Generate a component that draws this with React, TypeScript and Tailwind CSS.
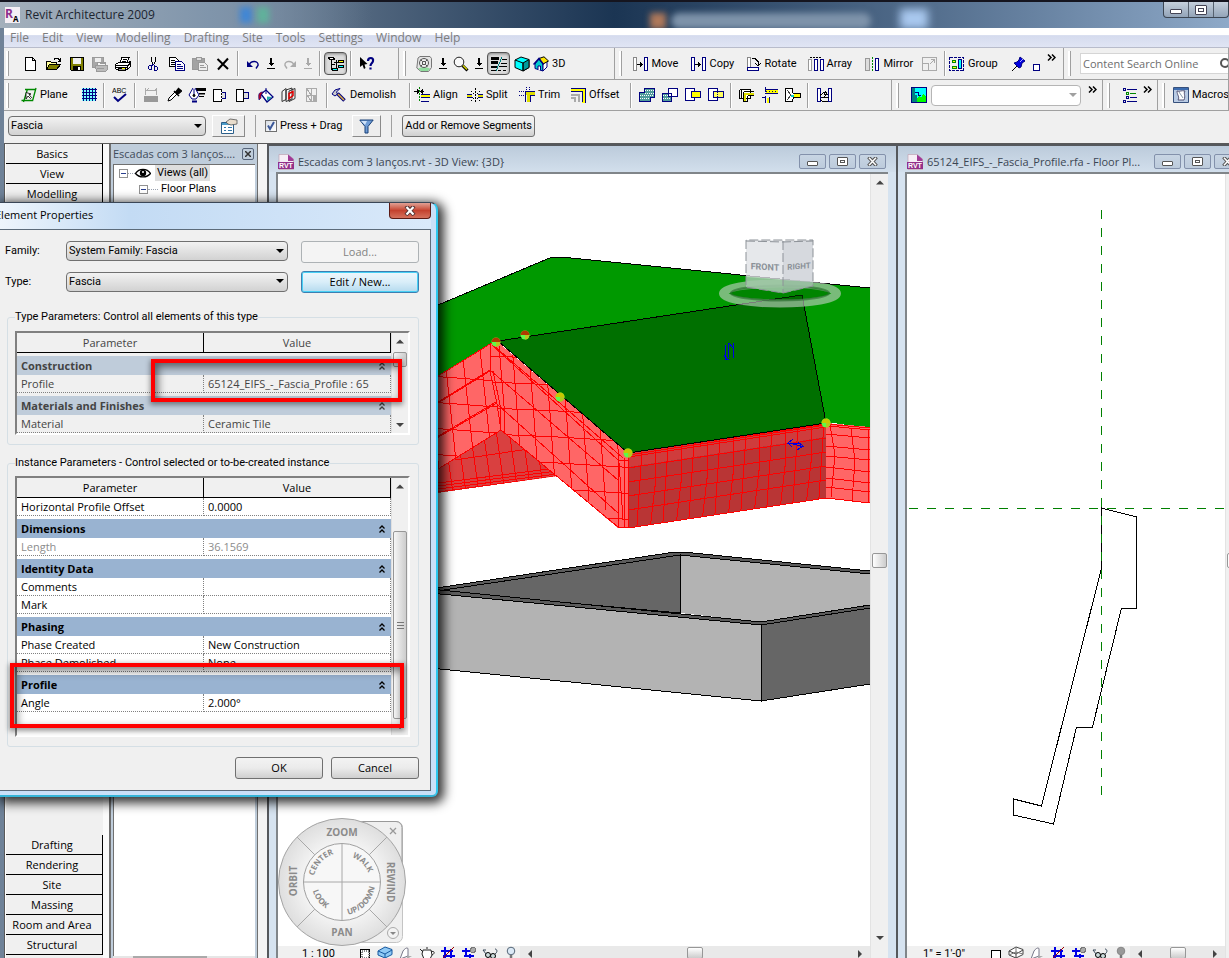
import { useState } from 'react';
import type { ReactNode } from 'react';
import clsx from 'clsx';

const NAVY = '#000080';

function Icon({ w = 16, children, smooth }: { w?: number; children: ReactNode; smooth?: boolean }) {
  return (
    <svg
      width={w}
      height="16"
      viewBox={`0 0 ${w} 16`}
      fill="none"
      stroke="#000"
      className="shrink-0"
      shapeRendering={smooth ? 'auto' : 'crispEdges'}
      aria-hidden="true"
    >
      {children}
    </svg>
  );
}

/* ---------- toolbar icons ---------- */

const icons: Record<string, ReactNode> = {
  new: <Icon><path d="M2.500 1.500h7l3 3v10h-10zM9.500 1.500v3h3" fill="#fff" /></Icon>,
  open: (
    <Icon>
      <path d="M.5 13.500v-8h4l1 1h5v3" fill="#ffff99" />
      <path d="M.5 13.500l3-5h11l-4 5z" fill="#808000" />
      <path d="M8 3.500l1-1h3l2 2M14.500 2v3h-3" />
    </Icon>
  ),
  save: (
    <Icon>
      <path d="M1.500 1.500h13v13h-12l-1-1z" fill="#808000" />
      <path d="M4 2h8v6H4z" fill="#f0f0f0" stroke="none" />
      <path d="M4 10h8v5H4z" fill="#000" stroke="none" />
      <path d="M9 11h2v3H9z" fill="#fff" stroke="none" />
    </Icon>
  ),
  saveGray: (
    <Icon>
      <g stroke="#9a9a9a">
        <path d="M.5 1.500h11v10H.5z" fill="#a8a8a8" />
        <path d="M3 2h6v4H3z" fill="#eee" stroke="none" />
        <path d="M5 10l1-4h8l-1 4z" fill="#f4f4f4" />
        <path d="M3.500 9.500h12v4l-2 2h-9z" fill="#bbb" />
        <path d="M5 12.500h7M7.500 7.500h5" />
      </g>
    </Icon>
  ),
  print: (
    <Icon>
      <path d="M5 6.500l2-5h7l-2 5z" fill="#fff" />
      <path d="M7.500 3.500h4M6.500 5h4" />
      <path d="M.5 8.500l3-2h10l2-1v5l-3 3H2l-1.500-1z" fill="#fff" />
      <path d="M1 9.500h12M1 11.500h11M12.500 13v-3l3-3" />
      <path d="M3 12h7v2.500H3z" fill="#999" />
      <path d="M7 12.500h3" stroke="#ff0" />
    </Icon>
  ),
  cut: (
    <Icon>
      <path d="M5.500 1v4l2 4M9.500 1v4l-2 4" />
      <g stroke={NAVY}>
        <path d="M3.500 9.500h2v4h-2l-1-1v-2zM8.500 10.500h2l1 1v2l-1 1h-2z" />
        <path d="M5.500 9.500l2-1 2 2" />
      </g>
    </Icon>
  ),
  copy: (
    <Icon>
      <path d="M.5 1.500h6l3 3v6h-9z" fill="#fff" />
      <path d="M2 4.500h4M2 6.500h5M2 8.500h5" />
      <path d="M6.500 5.500h6l3 3v6h-9z" fill="#fff" stroke={NAVY} />
      <path d="M8 8.500h4M8 10.500h6M8 12.500h6" stroke={NAVY} />
    </Icon>
  ),
  paste: (
    <Icon>
      <path d="M.5 2.500h12v11H.5z" fill="#a3a3a3" stroke="#999" />
      <path d="M4 1h5v3H4z" fill="#ddd" stroke="#999" />
      <path d="M6.500 6.500h6l3 3v5h-9z" fill="#eee" stroke="#999" />
      <path d="M8 9.500h4M8 11.500h6" stroke="#999" />
    </Icon>
  ),
  del: <Icon smooth><path d="M2.500 3l10.500 10M13 2.500L3 13.500" strokeWidth="2" /></Icon>,
  undo: <Icon smooth><path d="M4 9c2-5 10-4.500 9 .5l-2 3" stroke={NAVY} strokeWidth="1.400" /><path d="M2 5v6h6z" fill={NAVY} stroke="none" /></Icon>,
  redo: <Icon smooth><path d="M12 9C10 4 2 4.500 3 9.500l2 3" stroke="#aaa" strokeWidth="1.400" /><path d="M14 5v6H8z" fill="#aaa" stroke="none" /></Icon>,
  down: <Icon w={8}><path d="M3 2h2v5h2L4 10 1 7h2zM0 12h8v1H0z" fill="#000" stroke="none" /></Icon>,
  downGray: <Icon w={8}><path d="M3 2h2v5h2L4 10 1 7h2zM0 12h8v1H0z" fill="#aaa" stroke="none" /></Icon>,
  tree: (
    <Icon>
      <path d="M3.500 4v9h2M3.500 8.500h3M8.500 4v8M6 6.500h4" />
      <path d="M.5 1.500h5l1 2h-5z" fill="#fff" />
      <path d="M10.500 4.500h5v2h-5z" fill="#ff0" />
      <path d="M10.500 9.500h5v2h-5z" fill="#0ff" />
      <path d="M4.500 12.500h5v2h-5z" fill="#0ff" />
    </Icon>
  ),
  help: (
    <Icon smooth>
      <path d="M1 1v10l2.500-2 1.500 4 1.500-1-1-3.500 3-.5z" fill="#000" stroke="none" />
      <path d="M9 5c0-4 6-4 5 0 0 2-2.500 2-2.500 5M11.500 11.500v2" stroke={NAVY} strokeWidth="2.200" />
    </Icon>
  ),
  wheel: (
    <Icon smooth>
      <path d="M2 2l2-1.500h10l1.500 2v9l-3 4H5L.8 12z" fill="#e4e4e4" stroke="#777" />
      <path d="M2 12.500c4-2 8-2 12 0l-2 2.500H5z" fill="#8fdc9c" stroke="none" />
      <circle cx="8" cy="7" r="4.500" fill="#eee" stroke="#555" />
      <path d="M6.500 5.500h3v3h-3zM4.500 3.500l2 2M11.500 3.500l-2 2M4.500 10.500l2-2M11.500 10.500l-2-2" stroke="#555" />
    </Icon>
  ),
  zoom: (
    <Icon smooth>
      <circle cx="6" cy="6" r="4.800" fill="#f8f8f8" stroke="#222" />
      <path d="M9.500 9.500l5 5" strokeWidth="3" />
      <path d="M10 9.500l4 4" stroke="#d6d600" strokeWidth="1.500" />
    </Icon>
  ),
  thin: (
    <Icon>
      <path d="M0 2.500h8M0 6.500h7" strokeWidth="3" />
      <path d="M0 10.500h6" strokeWidth="2" />
      <path d="M0 14.500h5M11 3.500h5M10 7.500h6M8 10.500h8M7 14.500h3M12 14.500h3" />
      <path d="M11 1L5 15" stroke="#008080" />
    </Icon>
  ),
  cube: (
    <Icon smooth>
      <path d="M1 4l6-3 8 2.500v8L9 15l-8-3.500z" fill="#0ff" />
      <path d="M9 7l6-3.500v8L9 15z" fill="#009c9c" />
      <path d="M1 4l8 3v8" />
    </Icon>
  ),
  house: (
    <Icon smooth>
      <path d="M2 8l4-5 4 5v7l-8-2.500z" fill="#0cc" stroke={NAVY} />
      <path d="M10 8l4-3v6l-4 4z" fill="#fff" stroke={NAVY} />
      <path d="M6 2.500L11 .8 15.500 5 10 8z" fill="#ffe600" />
      <path d="M.5 8.500L6 2.500l4.500 6" stroke={NAVY} strokeWidth="1.500" />
      <path d="M5 14v-4h2.500v4.500" fill="#fff" stroke={NAVY} />
    </Icon>
  ),
  move: <Icon><path d="M.5 1.500h3v13h-3z" fill="#fff" stroke="#888" /><path d="M11.500 1.500h3v13h-3z" fill="#fff" stroke={NAVY} strokeWidth="1.500" /><path d="M4 8.500h6M7.500 6v5M8.500 7v3" /></Icon>,
  copy2: <Icon><path d="M.5 1.500h3v13h-3zM11.500 1.500h3v13h-3z" fill="#fff" stroke={NAVY} strokeWidth="1.500" /><path d="M4 8.500h6M7.500 6v5M8.500 7v3" /></Icon>,
  rotate: <Icon><path d="M1.500 1.500h3v10h-3z" fill="#fff" stroke="#888" /><path d="M1.500 11.500h11v3h-11z" fill="#fff" stroke={NAVY} strokeWidth="1.500" /><path d="M6 2.500h3l3 3v4M9.500 7.500l2.500 2.500 2.500-2.500" /></Icon>,
  array: <Icon><path d="M.5 3.500h3v11h-3z" fill="#fff" stroke="#999" /><path d="M6.500 3.500h3v11h-3zM12.500 3.500h3v11h-3z" fill="#fff" stroke={NAVY} /><path d="M2 1.500h12" strokeDasharray="2 1" /></Icon>,
  mirror: <Icon><path d="M.5 2.500h4v12h-4z" fill="#ddd" stroke="#999" /><path d="M10.500 2.500h3v12h-3z" fill="#fff" stroke={NAVY} strokeWidth="1.500" /><path d="M7.500 1v14" stroke="#080" strokeDasharray="2 1" /></Icon>,
  scale: <Icon><path d="M.5 1.500h14v13H.5zM.5 7.500h6v7M7.500 8.500l5-5M9 3.500h3.500V7" stroke="#aaa" /></Icon>,
  group: (
    <Icon>
      <path d="M.5 1.500h14v13H.5z" stroke={NAVY} strokeDasharray="3 1" />
      <path d="M3.500 4.500h3v2h-3zM3.500 10.500h4v2h-4z" fill="#ff0" stroke="#080" />
      <path d="M9.500 3.500h3v9h-3z" fill="#0ff" stroke={NAVY} />
    </Icon>
  ),
  pin: <Icon smooth><path d="M1 15l5-5" /><path d="M3 7l3-1 2-2 1-3 5 4-3 2-1 4-2 1z" fill="#0000e0" stroke={NAVY} /><path d="M9 6l3-3" stroke="#aaf" /></Icon>,
  plane: <Icon smooth><path d="M4 2.500h11M.5 13.500h11M2.500 15L6.500 2M11.500 14L15 1" stroke="#080" strokeWidth="1.300" /><path d="M5 12V5.500l5 1.500-2 .7 2.500 2.800-1 1-2.500-2.500z" fill="#fff" stroke="#000" strokeWidth=".8" /></Icon>,
  grid: <Icon><path d="M1 1h14v13H1z" fill="#7ff" stroke="none" /><path d="M1 2.500h15M1 5.500h15M1 8.500h15M1 11.500h15M2.500 1v13M5.500 1v13M8.500 1v13M11.500 1v13M14.500 1v13" stroke={NAVY} /></Icon>,
  dims: <Icon><path d="M1 9h14v6H1z" fill="#999" stroke="none" /><path d="M2.500 1v7M13.500 1v7M3 3.500h10M4 3l2-2M12 3l2-2" stroke="#aaa" /></Icon>,
  dropper: <Icon smooth><path d="M2 14l1-3 6-6 2 2-6 6z" fill="#fff" /><path d="M8 4l5 5M9.500 5.500l3-4 3 2.500-4 3.500z" strokeWidth="1.500" fill="#000" /></Icon>,
  linework: <Icon w={18} smooth><path d="M8 1h10v3H8zM11 6h6v1.500h-6zM11 9h5v1h-5z" fill="#000" stroke="none" /><path d="M5 1L1 8l3 4h4l3-4-4-7M6 2v6" fill="#fff" stroke={NAVY} /><path d="M4 14.500h5" stroke={NAVY} strokeWidth="2" /><circle cx="6" cy="8.500" r="1" fill="#000" /></Icon>,
  boxIn: <Icon><path d="M7 5.500h6v6H7" fill="#ddd" stroke={NAVY} /><path d="M1.500 2.500h8v12h-8z" fill="#fff" stroke="none" /><path d="M9.500 2.500v12" strokeDasharray="2 1" /><path d="M9.500 14.500h-8v-12h8" /></Icon>,
  boxOut: <Icon><path d="M8 5.500h5v6H8" fill="#ddd" stroke={NAVY} /><path d="M1.500 2.500h7v12h-7z" fill="#fff" /></Icon>,
  paint: <Icon smooth><path d="M3 7l5-4 7 7-6 5z" fill="#fff" stroke={NAVY} strokeWidth="1.300" /><path d="M8 1v6" stroke={NAVY} /><path d="M9 9.500l5 .5-5 4z" fill="#2aa" stroke="none" /><path d="M5 5C1 5 0 7 1 13l2-2V8z" fill="#c00020" stroke={NAVY} strokeWidth=".6" /></Icon>,
  book: <Icon smooth><path d="M1 4.500l4-3v11l-4 2zM5 3l6-2v11l-6 2.500zM8 4l6-2.500v10l-6 3z" fill="#f4f4f4" stroke="#333" /><path d="M8 6.500l4-2v4l-4 3z" stroke="#e00000" strokeWidth="1.500" /></Icon>,
  split2: <Icon><g stroke="#aaa"><path d="M2.500 1.500h10v13h-10zM7.500 2v12M3 8.500h9" /><path d="M3 2l4 6M3 8l4 6" /><path d="M9 9h3v5H9z" fill="#aaa" /></g></Icon>,
  hammer: <Icon smooth><path d="M1 7l3-4 5-1.500L5.500 5l1 2L4 9z" fill="#ccc" stroke={NAVY} /><path d="M6.500 6.500l7 7" stroke={NAVY} strokeWidth="3.500" /><path d="M7 7l6 6" stroke="#e0b040" strokeWidth="1.500" /></Icon>,
  align: <Icon><path d="M0 4.500h5M10 4.500H6M3 2.500l2 2-2 2M9 2.500l-2 2 2 2" /><path d="M5.500 0v14" stroke="#080" strokeDasharray="2 1" /><path d="M7 7.500h9M7 10.500h9M7 14.500h8" stroke={NAVY} /><path d="M7 9h9" stroke="#ff0" strokeWidth="2" /></Icon>,
  split: <Icon><path d="M0 9h5M11 9h5" stroke="#dd0" strokeWidth="3" /><path d="M0 7.500h5M0 10.500h6M11 7.500h5M11 10.500h5" stroke={NAVY} /><path d="M8.500 1v14M4 4l3 3M13 4l-3 3M4 14l3-3M13 14l-3-3" strokeDasharray="2 1" /></Icon>,
  trim: <Icon><path d="M6 6.500h10M9 5v10" stroke="#dd0" strokeWidth="3" /><path d="M6 4.500h10M11 8.500h5M6.500 5v10M11.500 9v6" stroke={NAVY} /><path d="M0 4.500h5M0 8.500h5M7.500 0v4M10.500 0v4" stroke={NAVY} strokeDasharray="1 1" /></Icon>,
  offset: <Icon><path d="M1 3h12.500V16" stroke="#ff0" strokeWidth="3" /><path d="M1 1.500h14v14M1 4.500h11V15" stroke={NAVY} /><path d="M1 7.500h8V15M1 11h4v4" stroke="#aaa" strokeWidth="2" /></Icon>,
  join: <Icon><path d="M5.500 1.500h10v9h-4v4H.500v-9h5z" fill="#4f9a9a" stroke={NAVY} /><path d="M6 3.500h9M6 6.500h9M1 8.500h14M1 11.500h10" stroke="#fff" strokeDasharray="1 1" /></Icon>,
  unjoin: <Icon><path d="M.5 6.500h9v8h-9z" fill="#4f9a9a" stroke={NAVY} /><path d="M1 8.500h8M1 11.500h8" stroke="#fff" strokeDasharray="1 1" /><path d="M6.500 1.500h9v8h-9z" fill="#fff" stroke={NAVY} /><path d="M6 6.500h3.500v3" stroke={NAVY} /></Icon>,
  cutGeo: <Icon><path d="M.5 1.500h9v12h-9z" fill="#fff" stroke={NAVY} /><path d="M6.500 4.500h9v6h-9z" fill="#ff0" stroke={NAVY} /></Icon>,
  uncutGeo: <Icon><path d="M.5 1.500h9v12h-9z" fill="#fff" stroke={NAVY} /><path d="M5.500 4.500h10v6h-10z" fill="#ffff60" stroke={NAVY} /><path d="M9.500 5v5" stroke={NAVY} strokeDasharray="1 1" /></Icon>,
  wallJoin: <Icon><path d="M.5 2.500h11v9h-9v-9" fill="#fff" /><path d="M5 6.500h10M6 6v9" stroke="#dd0" strokeWidth="2" /><path d="M4.500 4.500h10M8.500 8.500h6M4.500 4.500v10h4v-6M.5 2.500v9h3" /></Icon>,
  wallSplit: <Icon><path d="M4 4.500h12" stroke="#ff0" strokeWidth="3" /><path d="M3 2.500h13M3 6.500h13M0 10.500h3M3.500 9v7M7.500 10v6M3.500 0v5" stroke={NAVY} /><path d="M5.500 11v5" stroke="#ff0" strokeWidth="2" /><path d="M4 4.500h10" stroke={NAVY} strokeDasharray="1 2" /></Icon>,
  beam: <Icon><path d="M.5 1.500h7v4l2 2v3l-2 2v2h-7z" fill="#fff" /><path d="M2 3l4 5-4 5" stroke="#444" /><path d="M9 8.500h6" stroke="#ff0" strokeWidth="3" /><path d="M8 6.500h7.500v4H8" /><path d="M6 8.500h3" stroke="#0cc" strokeWidth="2" /></Icon>,
  align2: <Icon><path d="M1.500 1.500h3v13h-3zM12.500 1.500h3v13h-3z" fill="#fff" stroke={NAVY} /><path d="M4 8.500l4-3v2h4M13 10.500H5M4 12.500l3 2h5M9 4l2 3-3 3" /></Icon>,
  scenery: <Icon><path d="M.5.500h15v15H.500z" fill="#0ff" stroke={NAVY} /><path d="M1 1v14h5V8H4V1z" fill="#008080" stroke="none" /><path d="M6 15v-4l3-2 1 2 2-4 3 3v5z" fill="#0f0" stroke="none" /><path d="M4 5h3v3h3" stroke={NAVY} /></Icon>,
  list: <Icon><path d="M1.500 1.500h2v2h-2zM4.500 9.500h2v2h-2zM1.500 13.500h2v2h-2zM5 2.500h10M8 10.500h7M5 14.500h10" stroke={NAVY} /><path d="M4.500 5.500h2v2h-2zM8 6.500h6" stroke="#080" /></Icon>,
  macros: <Icon smooth><path d="M.5.500h15v15H.500z" fill="#b9cbe4" stroke="#36507c" /><path d="M1 1h14v2H1z" fill="#3c6cb0" stroke="none" /><path d="M4 4c3 1 4-1 8 0-2 3 1 4-1 9H5c2-3-1-5-1-9z" fill="#fff" stroke="#557" /><path d="M6 5l4 6" stroke="#89a" /></Icon>,
};

function Abc() {
  return (
    <svg width="16" height="18" viewBox="0 0 16 18" aria-hidden="true">
      <text x="0" y="7" fontSize="7" className="font-['Liberation_Sans',sans-serif]">ABC</text>
      <path d="M2 11l4 4L14 8" fill="none" stroke={NAVY} strokeWidth="2" />
    </svg>
  );
}

function Tool({ name, label, text, className, pressed }: { name: string; label?: string; text?: string; className?: string; pressed?: boolean }) {
  return (
    <button
      type="button"
      aria-label={text ? undefined : label ?? name}
      className={clsx(
        'flex h-[23px] shrink-0 items-center whitespace-nowrap',
        text ? 'gap-[3px] text-left' : 'justify-center',
        pressed && 'rounded-sm border border-[#555] bg-[#dcdcdc] shadow-[inset_0_1px_3px_rgba(0,0,0,0.4)]',
        className ?? 'w-[23px]'
      )}
    >
      {name === 'abc' ? <Abc /> : icons[name]}
      {text && <span>{text}</span>}
    </button>
  );
}

function Sep() {
  return <span className="mx-[3px] h-[25px] w-[2px] shrink-0 border-l border-[#a0a0a0] bg-white" />;
}

function Band({ className, children }: { className?: string; children: ReactNode }) {
  return (
    <div className={clsx('flex h-full items-center overflow-hidden border-r border-[#a0a0a0] pl-[2px]', className)}>
      <span className="h-[25px] w-[3px] shrink-0 border-r border-[#a0a0a0] bg-white" />
      {children}
    </div>
  );
}

function More() {
  return (
    <button type="button" aria-label="More buttons" className="mb-3 w-4 shrink-0">
      <svg width="9" height="7" viewBox="0 0 9 7" fill="none" stroke="#000" strokeWidth="1.500" aria-hidden="true">
        <path d="M1 .5l3 3-3 3M5 .5l3 3-3 3" />
      </svg>
    </button>
  );
}

function Caret({ className }: { className?: string }) {
  return (
    <svg width="8" height="4" viewBox="0 0 8 4" className={clsx('pointer-events-none absolute top-2', className)} aria-hidden="true">
      <path d="M0 0h8L4 4z" fill="currentColor" />
    </svg>
  );
}

function Combo({ id, value, className, label }: { id: string; value: string; className: string; label?: string }) {
  return (
    <div className={clsx('relative', className)}>
      <select
        id={id}
        aria-label={label}
        className="block h-5 w-full appearance-none rounded-sm border border-[#707070] bg-linear-to-b from-[#f2f2f2] to-[#d2d2d2] pl-[2px] leading-4 text-black"
      >
        <option>{value}</option>
      </select>
      <Caret className="right-1 text-black" />
    </div>
  );
}

function PushButton({ children, className, disabled }: { children: ReactNode; className: string; disabled?: boolean }) {
  return (
    <button
      type="button"
      disabled={disabled}
      className={clsx(
        'h-[22px] rounded-[3px] border',
        disabled
          ? 'border-[#adb2b5] bg-[#f4f4f4] text-[#838383]'
          : 'border-[#707070] bg-linear-to-b from-[#f3f3f3] via-[#ebebeb] to-[#cfcfcf] text-black',
        className
      )}
    >
      {children}
    </button>
  );
}

/* ---------- title, menu, toolbars ---------- */

function TitleBar() {
  return (
    <header className="flex h-7 shrink-0 items-start overflow-hidden border-t-2 border-[#15151f] bg-linear-to-r from-[#a8b4c0] via-[#1b3553] via-50% to-[#8ea9c8]">
      <div className="flex h-full flex-1 items-center gap-[5px] bg-linear-to-r from-[#a4b0bc] from-0% via-[#8095ab] via-18% to-transparent to-32% pl-1">
        <svg width="16" height="18" viewBox="0 0 16 18" className="shrink-0" aria-hidden="true">
          <path d="M1 1h15v16H1z" fill="#f4eef4" />
          <text x="1" y="12" fontSize="12" fontWeight="700" fill="#8c2f8c" className="font-['Open_Sans',sans-serif]">R</text>
          <text x="9" y="16" fontSize="8" fontWeight="700" className="font-['Open_Sans',sans-serif]">A</text>
        </svg>
        <h1 className="text-[12px] text-[#1c2530]">Revit Architecture 2009</h1>
        <span className="ml-[80px] h-4 w-3 bg-[#3f86d6] blur-[3px]" />
        <span className="h-4 w-3 bg-[#5fb39b] blur-[3px]" />
        <span className="mt-3 ml-[376px] h-4 w-4 bg-[#b0795a] blur-[3px]" />
        <span className="mt-3 h-4 w-[200px] rounded-lg bg-[#7e93aa] blur-[3px]" />
        <span className="mt-2 ml-6 h-5 w-7 bg-[#a9c8ef] blur-[4px]" />
      </div>
      <div className="flex h-4 rounded-b border border-t-0 border-[#3c4653] bg-linear-to-b from-[#c5d0dd] to-[#93a4b8]">
        <button type="button" aria-label="Minimize" className="flex w-[25px] items-end justify-center border-r border-[#56616f] pb-[3px]">
          <span className="h-[5px] w-3 rounded-[1px] border border-[#445] bg-white" />
        </button>
        <button type="button" aria-label="Restore" className="flex w-[25px] items-center justify-center border-r border-[#56616f]">
          <span className="h-[10px] w-3 rounded-[1px] border border-[#445] bg-white p-[2px]"><span className="block h-full border border-[#445]" /></span>
        </button>
        <span className="w-[14px]" />
      </div>
    </header>
  );
}

const menus = ['File', 'Edit', 'View', 'Modelling', 'Drafting', 'Site', 'Tools', 'Settings', 'Window', 'Help'];

function MenuBar() {
  return (
    <nav className="flex h-5 shrink-0 items-center gap-[13px] border-b border-[#b8bccb] bg-linear-to-b from-white from-35% via-[#d5dbee] via-40% to-[#e0e5f4] pl-[6px] text-[12px] text-[#7d7d7d]">
      {menus.map((m) => (
        <button key={m} type="button">{m}</button>
      ))}
    </nav>
  );
}

function Toolbars() {
  const [drag, setDrag] = useState(true);
  return (
    <div className="shrink-0 bg-[#f0f0f0] font-['Roboto',sans-serif] text-[11px] text-black">
      <div className="flex h-8 items-center border-b border-[#a0a0a0]">
        <Band className="w-[395px] shrink-0">
          <span className="w-[10px]" />
          <Tool name="new" /><Tool name="open" /><Tool name="save" /><Tool name="saveGray" label="Save to central" /><Tool name="print" />
          <Sep />
          <Tool name="cut" /><Tool name="copy" /><Tool name="paste" /><Tool name="del" label="Delete" />
          <Sep />
          <Tool name="undo" className="w-[21px]" /><Tool name="down" className="w-4" />
          <Tool name="redo" className="w-[21px]" /><Tool name="downGray" className="w-4" />
          <Sep />
          <Tool name="tree" pressed label="Project browser" />
          <Sep />
          <Tool name="help" />
        </Band>
        <Band className="ml-[2px] w-[214px] shrink-0">
          <span className="w-[6px]" />
          <Tool name="wheel" /><Tool name="down" className="w-4" />
          <Tool name="zoom" className="w-5" /><Tool name="down" className="w-4" />
          <Tool name="thin" pressed label="Thin lines" /><Tool name="cube" />
          <Tool name="house" text="3D" />
        </Band>
        <Band className="ml-[2px] w-[447px] shrink-0">
          <span className="w-3" />
          <Tool name="move" text="Move" className="w-[58px]" />
          <Tool name="copy2" text="Copy" className="w-[55px]" />
          <Tool name="rotate" text="Rotate" className="w-[62px]" />
          <Tool name="array" text="Array" className="w-[57px]" />
          <Tool name="mirror" text="Mirror" className="w-[57px]" />
          <Tool name="scale" className="w-4" />
          <span className="w-1" />
          <Sep />
          <Tool name="group" text="Group" className="w-[62px]" />
          <Tool name="pin" className="w-4" />
          <span className="mt-2 ml-[6px] size-[7px] shrink-0 border border-[#000080] bg-white" />
          <span className="w-[7px] shrink-0" />
          <More />
        </Band>
        <Band className="ml-[2px] flex-1">
          <div className="ml-[9px] flex h-[21px] flex-1 items-center border border-r-0 border-[#d5d5d5] bg-white">
            <input
              type="text"
              aria-label="Content Search Online"
              placeholder="Content Search Online"
              className="w-[135px] shrink-0 px-[2px] font-['Open_Sans',sans-serif] text-[11px] outline-none placeholder:text-[#6d6d6d]"
            />
            <svg width="14" height="14" viewBox="0 0 14 14" className="shrink-0" aria-hidden="true">
              <circle cx="9" cy="6" r="4" fill="none" stroke="#555" strokeWidth="2" />
            </svg>
          </div>
        </Band>
      </div>

      <div className="flex h-[31px] items-center border-b border-[#a0a0a0]">
        <Band className="w-[888px] shrink-0">
          <span className="w-3 shrink-0" />
          <Tool name="plane" text="Plane" className="w-[56px]" />
          <Tool name="grid" />
          <Sep />
          <Tool name="abc" label="Spelling" />
          <Sep />
          <Tool name="dims" /><Tool name="dropper" /><Tool name="linework" /><Tool name="boxIn" /><Tool name="boxOut" />
          <Tool name="paint" /><Tool name="book" /><Tool name="split2" />
          <Sep />
          <Tool name="hammer" text="Demolish" className="w-[75px]" />
          <Sep />
          <Tool name="align" text="Align" className="w-[53px]" />
          <Tool name="split" text="Split" className="w-[52px]" />
          <Tool name="trim" text="Trim" className="w-[51px]" />
          <Tool name="offset" text="Offset" className="w-[57px]" />
          <Sep />
          <Tool name="join" /><Tool name="unjoin" /><Tool name="cutGeo" /><Tool name="uncutGeo" />
          <Sep />
          <Tool name="wallJoin" /><Tool name="wallSplit" /><Tool name="beam" />
          <Sep />
          <Tool name="align2" />
        </Band>
        <Band className="ml-[2px] w-[209px] shrink-0">
          <Tool name="scenery" className="ml-3 w-4" />
          <div className="relative mr-[7px] ml-1 w-[150px] shrink-0">
            <select aria-label="Design option" disabled className="block h-[21px] w-full appearance-none rounded-sm border border-[#b5b5b5] bg-white">
              <option></option>
            </select>
            <Caret className="right-1 text-[#a0a0a0]" />
          </div>
          <More />
        </Band>
        <Band className="ml-[2px] w-[53px] shrink-0">
          <Tool name="list" className="ml-3 w-4" />
          <span className="w-[5px] shrink-0" />
          <More />
        </Band>
        <Band className="ml-[2px] flex-1">
          <Tool name="macros" text="Macros" className="ml-2" />
        </Band>
      </div>

      <div className="flex h-8 items-center pb-[2px] pl-1">
        <Combo id="type-selector" label="Type selector" value="Fascia" className="w-[198px]" />
        <button type="button" aria-label="Properties" className="ml-[6px] flex h-[22px] w-[33px] items-center justify-center border border-[#fff] border-r-[#8a8a8a] border-b-[#8a8a8a] bg-[#ededed]">
          <svg width="18" height="16" viewBox="0 0 18 16" aria-hidden="true">
            <path d="M1.500 4.500h12v11h-12z" fill="#fff" stroke="#2c5f8a" />
            <path d="M2 5h11v2H2z" fill="#4c9cc8" />
            <path d="M4 9.500h2M4 12.500h2M8 9.500h4M8 12.500h4" stroke="#37a" />
            <path d="M6 4l4-3 7 1v4l-6 1-3-1z" fill="#e8dccb" stroke="#555" strokeWidth=".8" />
          </svg>
        </button>
        <span className="ml-[10px] h-[22px] w-px bg-[#a0a0a0]" />
        <label className="ml-[9px] flex items-center gap-[3px]">
          <span className="relative flex size-3 items-center justify-center">
            <input
              type="checkbox"
              checked={drag}
              onChange={() => setDrag(!drag)}
              className="size-3 appearance-none border border-[#707070] bg-linear-to-br from-[#d8dde4] to-white"
            />
            {drag && (
              <svg width="10" height="10" viewBox="0 0 10 10" className="pointer-events-none absolute" aria-hidden="true">
                <path d="M2 4.500L4 8l4-7" fill="none" stroke="#3b5899" strokeWidth="2" />
              </svg>
            )}
          </span>
          Press + Drag
        </label>
        <button type="button" aria-label="Filter" className="ml-[10px] flex h-[22px] w-[29px] items-center justify-center border border-[#fff] border-r-[#8a8a8a] border-b-[#8a8a8a] bg-[#ededed]">
          <svg width="15" height="15" viewBox="0 0 15 15" aria-hidden="true">
            <path d="M.8 1h13.400L9 7.500V14H6V7.500z" fill="#6f9cd6" stroke="#173f77" />
            <path d="M2 2h6L6 6z" fill="#cfe2f8" />
          </svg>
        </button>
        <span className="mr-[10px] ml-[10px] h-[22px] w-px bg-[#a0a0a0]" />
        <PushButton className="h-5 px-[2px] leading-4">Add or Remove Segments</PushButton>
      </div>
    </div>
  );
}

/* ---------- side panels ---------- */

function DesignTab({ children }: { children: ReactNode }) {
  return (
    <button type="button" className="block h-5 w-full border-r border-b border-black bg-[#f0f0f0] pr-1 text-center leading-[18px]">
      {children}
    </button>
  );
}

function DesignBar() {
  return (
    <aside className="flex w-[98px] shrink-0 flex-col border-l border-white bg-[#f0f0f0] pb-[3px] text-[11px]">
      {['Basics', 'View', 'Modelling'].map((t) => <DesignTab key={t}>{t}</DesignTab>)}
      <div className="flex-1" />
      {['Drafting', 'Rendering', 'Site', 'Massing', 'Room and Area', 'Structural'].map((t) => <DesignTab key={t}>{t}</DesignTab>)}
    </aside>
  );
}

function Minus() {
  return (
    <svg width="9" height="9" viewBox="0 0 9 9" className="shrink-0" shapeRendering="crispEdges" aria-hidden="true">
      <path d="M.5.500h8v8h-8z" fill="#fff" stroke="#919191" />
      <path d="M2 4.500h5" stroke="#2a3f8f" />
    </svg>
  );
}

function ProjectBrowser() {
  return (
    <aside className="flex w-[149px] shrink-0 flex-col border-r border-l-2 border-[#707070] bg-[#bfcddb]">
      <div className="flex h-5 items-center justify-between pr-[3px] pl-[2px] text-[11px] text-[#3f4c5a]">
        <span className="whitespace-nowrap">Escadas com 3 lanços....</span>
        <button type="button" aria-label="Close browser" className="flex size-3 shrink-0 items-center justify-center rounded-[2px] border border-[#56647a]">
          <svg width="6" height="6" viewBox="0 0 6 6" stroke="#333" strokeWidth="1.500" aria-hidden="true"><path d="M0 0l6 6M6 0L0 6" /></svg>
        </button>
      </div>
      <ul className="mr-[2px] ml-[2px] flex-1 overflow-hidden border-t border-l border-[#707070] bg-white pl-[5px] font-['Roboto',sans-serif] text-[11px] leading-4">
        <li className="flex items-center">
          <Minus />
          <span className="w-[7px] border-t border-dotted border-gray-400" />
          <svg width="16" height="12" viewBox="0 0 16 12" aria-hidden="true">
            <path d="M.5 6.500C4 1 12 1 15.500 6.500 12 11 4 11 .5 6.500z" fill="#fff" stroke="#000" strokeWidth="1.300" />
            <circle cx="8" cy="6" r="3.200" /><circle cx="8" cy="5" r="1" fill="#fff" />
          </svg>
          <span className="ml-1 bg-[#dedede] px-[2px]">Views (all)</span>
        </li>
        <li className="flex items-center pl-5">
          <Minus />
          <span className="mr-[3px] w-[10px] border-t border-dotted border-gray-400" />
          Floor Plans
        </li>
      </ul>
      <div className="mr-[2px] ml-[2px] h-[2px] bg-[#e6e6e6] pl-5"><div className="h-full w-[74px] bg-[#aaa]" /></div>
    </aside>
  );
}

/* ---------- drawing windows ---------- */

function RvtIcon() {
  return (
    <svg width="16" height="16" viewBox="0 0 16 16" className="shrink-0" aria-hidden="true">
      <path d="M1 .5h9L15.500 5v10.500H1z" fill="#f6eef6" stroke="#b9a" strokeWidth=".6" />
      <path d="M10 .5L15.500 5v2H10z" fill="#a03a96" />
      <path d="M0 8h16v7H0z" fill="#93308a" />
      <text x="1" y="14" fontSize="7" fontWeight="700" fill="#fff" className="font-['Liberation_Sans',sans-serif]">RVT</text>
    </svg>
  );
}

function ChildButtons() {
  const box = 'flex h-[15px] w-[27px] items-center justify-center rounded-[2px] border border-[#8391ab] bg-linear-to-b from-[#c8d5e3] to-[#bccbdc]';
  return (
    <div className="flex shrink-0 gap-[3px]">
      <button type="button" aria-label="Minimize" className={box}><span className="mt-1 h-[5px] w-[11px] rounded-[1px] border border-[#555] bg-white" /></button>
      <button type="button" aria-label="Restore" className={box}><span className="flex h-[9px] w-[11px] items-center justify-center rounded-[1px] border border-[#555] bg-white"><span className="h-[3px] w-[5px] border border-[#555]" /></span></button>
      <button type="button" aria-label="Close" className={box}>
        <svg width="11" height="9" viewBox="0 0 11 9" aria-hidden="true">
          <path d="M1.500 0l8 9M9.500 0l-8 9" stroke="#555" strokeWidth="3.500" />
          <path d="M2 .8l7 7.400M9 .8L2 8.200" stroke="#fff" strokeWidth="1.500" />
        </svg>
      </button>
    </div>
  );
}

function Arrow({ dir }: { dir: 'up' | 'down' | 'left' | 'right' }) {
  const d = { up: 'M0 5.500L4 1.500l4 4z', down: 'M0 2h8L4 6z', left: 'M6 0v8L2 4z', right: 'M2 0v8l4-4z' }[dir];
  return <svg width="8" height="8" viewBox="0 0 8 8" className="shrink-0" aria-hidden="true"><path d={d} fill="#444" /></svg>;
}

function ViewControls({ scale, solid }: { scale: string; solid: boolean }) {
  return (
    <div className="flex shrink-0 items-start gap-1">
      <span className={clsx("pt-px font-['Roboto',sans-serif] text-[11px] leading-[14px]", solid ? 'w-[50px]' : 'w-[60px]')}>{scale}</span>
      <Icon w={17}>{solid ? <><path d="M4.500 3.500h9v9h-9z" fill="#fff" /><path d="M6 5h7v7H6z" stroke="#888" strokeDasharray="1 1" strokeWidth="2" /></> : <path d="M4.500 4.500h9v9h-9z" fill="#fff" />}</Icon>
      <Icon w={17} smooth><path d="M1 5l7-4 7 2.500v5L8 12 1 9z" fill={solid ? '#8fc9f5' : '#fff'} stroke={solid ? '#1558a0' : '#444'} /><path d="M1 5l7 3 7-4M8 8v4" stroke={solid ? '#1558a0' : '#444'} />{!solid && <path d="M8 1v7M1 9l7-3 7 2" stroke="#777" />}</Icon>
      <Icon w={17} smooth><path d="M2 13l3-8c2-3 5-4 5-2v7z" fill="#fff" stroke="#778" /><path d="M9 10h5l-5 3z" fill="#aaa" stroke="none" /></Icon>
      {solid && <Icon w={17} smooth><path d="M4 4h8l1 5-2 4H5L3 8zM4 6L1 3M12 6c4-2 4 2 1 3M7 2h2" fill="#fff" stroke="#222" /></Icon>}
      <Icon w={17}><path d="M5 1v11M1 5h12M11 3v10M3 10h12" stroke="#0000e6" strokeWidth="2" /><path d="M2 13L14 1" stroke="#900" /></Icon>
      <Icon w={17}><path d="M5 2v9M1 5h9M3 10h10M9 8v5" stroke="#0000e6" strokeWidth="2" /><circle cx="12" cy="4" r="2.500" fill="#aaa" stroke="#777" /></Icon>
      <Icon w={17} smooth><circle cx="6" cy="9" r="2.500" fill="#cdd" /><circle cx="11" cy="10" r="2.500" fill="#cdd" /><path d="M4 8L1 4h3M13 8c3-2 2-5 0-5" stroke="#345" /></Icon>
      <Icon w={17} smooth><circle cx="8" cy="5" r="3.800" fill={solid ? '#dbe9f6' : '#999'} stroke={solid ? '#567' : '#888'} /><path d="M8 9v6" stroke="#777" strokeWidth="2.500" /></Icon>
    </div>
  );
}

function ChildWindow({ title, className, scale, solid, children }: { title: string; className: string; scale: string; solid: boolean; children: ReactNode }) {
  return (
    <section className={clsx('flex min-w-0 flex-col border-l-2 border-[#55585c] bg-[#d6e3f0]', className)}>
      <div className="flex h-[26px] shrink-0 items-center gap-1 bg-linear-to-b from-[#bccbdb] to-[#d2dfec] pt-[5px] pr-[10px] pl-[9px] text-[#3b4653]">
        <RvtIcon />
        <h2 className="min-w-0 flex-1 overflow-hidden text-[11px] whitespace-nowrap">{title}</h2>
        <ChildButtons />
      </div>
      <div className="mr-2 ml-[7px] flex min-h-0 flex-1 border-t-2 border-l-2 border-[#808589] bg-white">
        <div className="flex min-w-0 flex-1 flex-col">
          <div className="min-h-0 flex-1">{children}</div>
          <div className="flex h-3 shrink-0 items-start overflow-hidden bg-[#f0f0f0]">
            <span className={solid ? 'w-6 shrink-0' : 'w-4 shrink-0'} />
            <ViewControls scale={scale} solid={solid} />
            <div className="flex h-full flex-1 items-center justify-between bg-[#e9e9e9] px-[6px] pt-1">
              <Arrow dir="left" />
              <span className="-mt-[3px] h-3 w-4 shrink-0 rounded-[2px] border border-[#979797] bg-linear-to-b from-white to-[#ccc]" />
              <Arrow dir="right" />
            </div>
          </div>
        </div>
        <div className="flex w-[18px] shrink-0 flex-col items-center justify-between border-l border-[#e3e3e3] bg-[#f0f0f0] pt-[5px] pb-4">
          <Arrow dir="up" />
          <span className="h-[15px] w-[15px] rounded-[2px] border border-[#979797] bg-linear-to-r from-white to-[#ccc]" />
          <Arrow dir="down" />
        </div>
      </div>
    </section>
  );
}

// repeats a slanted stroke at even steps; callers clip it to a face
function Strokes({ x, y, dx, dy, line, n }: { x: number; y: number; dx: number; dy: number; line: string; n: number }) {
  const d = Array.from({ length: n }, (_, i) => `M${x + dx * i} ${y + dy * i}${line}`).join('');
  return <path d={d} stroke="#f00" fill="none" />;
}

function Grip({ x, y, top = '#c8c800' }: { x: number; y: number; top?: string }) {
  return (
    <g stroke="none">
      <circle cx={x} cy={y} r="4.500" fill="#5dfa4a" />
      <path d={`M${x - 4.500} ${y}a4.500 4.500 0 0 1 9 0z`} fill={top} />
      <path d={`M${x} ${y}h4.500a4.500 4.500 0 0 1-4.500 4.500z`} fill="#b4c81e" />
    </g>
  );
}

function SteeringWheel() {
  return (
    <g className="font-['Open_Sans',sans-serif]" fontWeight="700" fill="#8b8b8b" textAnchor="middle">
      <defs>
        <radialGradient id="disc"><stop offset="0" stopColor="#fff" /><stop offset=".6" stopColor="#f3f3f3" /><stop offset="1" stopColor="#dedede" /></radialGradient>
        <path id="arc-tl" d="M315 891A29 29 0 0 1 349 853.500" />
        <path id="arc-tr" d="M339 856A27 27 0 0 1 370 886" />
        <path id="arc-bl" d="M312 878A31 31 0 0 0 338 913" />
        <path id="arc-br" d="M341 915A33 33 0 0 0 375 880" />
      </defs>
      <rect x="342" y="821.500" width="60.500" height="121" rx="6" fill="#efefef" stroke="#c4c4c4" />
      <path d="M360 821.500h36a6 6 0 0 1 6 6V864" fill="none" stroke="#999" />
      <circle cx="342" cy="882" r="63.500" fill="url(#disc)" stroke="#a4a4a4" />
      <circle cx="342" cy="882" r="38.500" fill="#f7f7f7" stroke="#a0a0a0" />
      <path d="M342 843.500v77M303.500 882h77M297.100 837.100l17.700 17.700M386.900 837.100l-17.700 17.700M297.100 926.900l17.700-17.700M386.900 926.900l-17.700-17.700" stroke="#a8a8a8" fill="none" />
      <g fontSize="10">
        <text x="342" y="836">ZOOM</text>
        <text x="342" y="936">PAN</text>
        <text transform="translate(297 881) rotate(-90)">ORBIT</text>
        <text transform="translate(387 882) rotate(90)">REWIND</text>
      </g>
      <g fontSize="8">
        <text><textPath href="#arc-tl" startOffset="50%">CENTER</textPath></text>
        <text><textPath href="#arc-tr" startOffset="50%">WALK</textPath></text>
        <text><textPath href="#arc-bl" startOffset="50%">LOOK</textPath></text>
        <text><textPath href="#arc-br" startOffset="50%">UP/DOWN</textPath></text>
      </g>
      <path d="M390 828l6 6M396 828l-6 6" stroke="#999" strokeWidth="1.300" />
      <circle cx="393" cy="933" r="5.500" fill="#f3f3f3" stroke="#aaa" />
      <path d="M390 932h6l-3 3z" fill="#888" />
    </g>
  );
}

function ModelView() {
  return (
    <svg className="block h-full w-full" viewBox="278 174 592 772" preserveAspectRatio="xMinYMin slice" role="img" aria-label="Roof model">
      <defs>
        <clipPath id="gable-left"><path d="M430 381l60-37v27l7 33 4 26-71 44z" /></clipPath>
        <clipPath id="gable-right"><path d="M490 344l9-1 129 110v75h-10L501 430l-4-26-7-33z" /></clipPath>
        <clipPath id="soffit"><path d="M430 474l71-44 56 46-127 18z" /></clipPath>
        <clipPath id="front"><path d="M628 453l198-30v75l-198 30z" /></clipPath>
      </defs>
      <g shapeRendering="crispEdges" fill="none">
        <path d="M400 321L552 257h9l309 31v140l-44-6-331-80-95 60z" fill="#009900" />
        <path d="M400 321L552 257h9l309 31" stroke="#000" />

        {/* far soffit */}
        <path d="M430 474l71-44 56 46-127 18z" fill="#d94040" />
        <g clipPath="url(#soffit)">
          <Strokes x={444} y={430} dx={13} dy={0} line="l10 70" n={9} />
          <path d="M430 484l127-16M430 487l127-16M430 490l127-16M430 493l127-17M455 460l80-12" stroke="#f00" />
        </g>

        {/* gable fascia */}
        <path d="M430 381l60-37 9-1 129 110v75h-10L501 430l-71 44z" fill="#ff6666" />
        <path d="M430 381l60-37 9-1M430 474l71-44 117 97h10M628 453v75M624 458v69M618 460v67M490 344v27l7 33 4 26M499 346l5 60v26M493 371l7 34v25" stroke="#f00" />
        <path d="M430 408l60-37M430 407l60-37M430 442l67-39M430 441l66-39" stroke="#f00" />
        <g clipPath="url(#gable-left)">
          <Strokes x={425} y={340} dx={18} dy={0} line="l14 130" n={5} />
          <Strokes x={430} y={376} dx={0} dy={26} line="l80 6" n={4} />
        </g>
        <g clipPath="url(#gable-right)">
          <path d="M492 345l126 115h10M490 370l128 110M497 404l121 109M493 345l130 113" stroke="#f00" />
          <Strokes x={512} y={345} dx={17} dy={9} line="l4 50 5 70" n={7} />
          <Strokes x={488} y={356} dx={0} dy={26} line="l70 3 80 5" n={7} />
        </g>

        {/* front fascia */}
        <path d="M628 453l198-30v75l-198 30z" fill="#b93535" />
        <path d="M628 453l198-30v14l-198 30z" fill="#cf3c3c" />
        <g clipPath="url(#front)">
          <Strokes x={628} y={468} dx={0} dy={14} line="l198-30" n={4} />
          <Strokes x={655} y={448} dx={26} dy={-4} line="l1 30-7 60" n={8} />
          <Strokes x={642} y={450} dx={26} dy={-4} line="l-2 30-4 60" n={8} />
        </g>
        <path d="M628 455l198-30M628 457l198-30M628 453l198-29M628 528l198-30M628 453v75M826 424v74" stroke="#f00" />

        {/* returning fascia */}
        <path d="M826 423l44 4v76l-44-5z" fill="#ff6666" />
        <path d="M826 434l44 4M826 446l44 4M826 456l44 4M826 467l44 5M826 478l44 5M826 487l44 5" stroke="#f00" />
        <path d="M826 424l44 4M828 426l42 4M826 498l44 5M830 425l5 30-4 42M851 428l4 33-3 40M868 430v72" stroke="#f00" />

        {/* selected roof plane */}
        <path d="M498 341l304-46 24 128-198 30z" fill="#007000" stroke="#000" />
        <path d="M725.500 345v14h3M728.500 343v15M733 348l-4-5M733 343v15M724 355l3 4M787 443.500h13M788 443l5-4M788 443l4 4M790 443l14 4M797 450l6-4-5-4" stroke="#0000e0" />

        {/* walls */}
        <path d="M430 589l245-37h8l187 19v3l-190-19-243 37z" fill="#5c5c5c" stroke="#000" />
        <path d="M437 591l243-36v58z" fill="#666" stroke="#000" />
        <path d="M680 555l190 19v32l-109 16-81-9z" fill="#b3b3b3" />
        <path d="M680 555v58M680 555l190 19" stroke="#000" />
        <path d="M430 592l331 33v76l-331-33z" fill="#b3b3b3" stroke="#000" />
        <path d="M761 625l109-17v76l-109 17z" fill="#666" stroke="#000" />
        <path d="M430 589l331 33 109-17v3l-109 17-331-32z" fill="#5c5c5c" stroke="#000" />
      </g>

      <Grip x={496} y={342} top="#b03a00" />
      <Grip x={525} y={335} top="#b03a00" />
      <Grip x={560} y={397} />
      <Grip x={628} y={453} />
      <Grip x={826} y={423} />

      {/* view cube */}
      <ellipse cx="780" cy="293.500" rx="57" ry="10" fill="none" stroke="#c9d2cb" strokeOpacity=".6" strokeWidth="8" />
      <ellipse cx="780" cy="293" rx="49" ry="7.500" fill="#006000" fillOpacity=".35" stroke="#2c6c30" strokeOpacity=".6" strokeWidth="2" />
      <path d="M746 240h37v53l-37-6z" fill="#e0e2e6" fillOpacity=".8" />
      <path d="M783 241l30-1v46l-30 7z" fill="#cfd2d8" fillOpacity=".85" />
      <path d="M746 277l37 3v13l-37-6zM783 280l30 2v4l-30 7z" fill="#48a050" fillOpacity=".35" />
      <path d="M746 240v47l37 6 30-7v-46zM783 241v52M746 241l37 1 30-1" fill="none" stroke="#8d9298" strokeDasharray="9 3" />
      <g className="font-['Roboto',sans-serif]" fontWeight="700" fill="#8b9198" textAnchor="middle">
        <text transform="translate(765 270) skewY(3)" fontSize="9">FRONT</text>
        <text transform="translate(799 269) skewY(-5)" fontSize="8">RIGHT</text>
      </g>

      <SteeringWheel />
    </svg>
  );
}

function ProfileView() {
  return (
    <svg className="block h-full w-full" viewBox="907 174 319 772" preserveAspectRatio="xMinYMin slice" role="img" aria-label="Fascia profile" shapeRendering="crispEdges" fill="none">
      <path d="M1101.500 508l35 9v91h-15l-29 119h-16l-23 97-40-9v-16l28 7 60-238z" stroke="#000" />
      <path d="M1101.500 210v588" stroke="#008000" strokeDasharray="9 9" />
      <path d="M909 508.500h317" stroke="#008000" strokeDasharray="9 9" />
    </svg>
  );
}

/* ---------- element properties dialog ---------- */

type Section = { title?: string; rows: [string, string, boolean?][] };

const typeParams: Section[] = [
  { title: 'Construction', rows: [['Profile', '65124_EIFS_-_Fascia_Profile : 65']] },
  { title: 'Materials and Finishes', rows: [['Material', 'Ceramic Tile']] },
];

const instanceParams: Section[] = [
  { rows: [['Horizontal Profile Offset', '0.0000']] },
  { title: 'Dimensions', rows: [['Length', '36.1569', true]] },
  { title: 'Identity Data', rows: [['Comments', ''], ['Mark', '']] },
  { title: 'Phasing', rows: [['Phase Created', 'New Construction'], ['Phase Demolished', 'None']] },
  { title: 'Profile', rows: [['Angle', '2.000°']] },
];

function ParamTable({ sections, muted, thumb, height }: { sections: Section[]; muted?: boolean; thumb: string; height: string }) {
  return (
    <div className={clsx('flex overflow-hidden border-t-2 border-l-2 border-[#808080] border-r-2 border-r-white border-b-2 border-b-white', height, muted ? 'bg-[#f0f0f0] text-[#444]' : 'bg-white text-black')}>
      <table className="h-fit w-[374px] table-fixed border-separate border-spacing-0 text-left font-['Open_Sans',sans-serif] text-[11px] leading-4">
        <thead>
          <tr className="bg-[#f0f0f0]">
            <th scope="col" className="h-5 border-r border-b border-black p-0 text-center font-normal">Parameter</th>
            <th scope="col" className="h-5 border-r border-b border-black p-0 text-center font-normal">Value</th>
          </tr>
        </thead>
        {sections.map((s, i) => (
          <tbody key={i}>
            {s.title && (
              <tr>
                <th
                  scope="colgroup"
                  colSpan={2}
                  className={clsx('h-[22px] border-t-[3px] p-0 pl-1 font-bold', muted ? 'border-[#f0f0f0] bg-[#bfccda]' : 'border-white bg-[#99b3d1]')}
                >
                  <span className="flex items-center justify-between pr-[6px]">
                    {s.title}
                    <svg width="6" height="8" viewBox="0 0 6 8" fill="none" stroke="currentColor" strokeWidth="1.300" aria-hidden="true">
                      <path d="M.5 3.500L3 1l2.500 2.500M.5 7.500L3 5l2.500 2.500" />
                    </svg>
                  </span>
                </th>
              </tr>
            )}
            {s.rows.map(([name, value, off]) => (
              <tr key={name} className={off ? 'text-[#8c8c8c]' : undefined}>
                <td className="h-[18px] overflow-hidden border-r border-b border-dotted border-[#808080] p-0 pl-1 whitespace-nowrap">{name}</td>
                <td className="h-[18px] overflow-hidden border-r border-b border-dotted border-[#808080] p-0 pl-1 whitespace-nowrap">{value}</td>
              </tr>
            ))}
          </tbody>
        ))}
      </table>
      <div className="flex flex-1 flex-col items-center border-l border-[#e0e0e0] bg-[#f0f0f0] pt-[5px] pb-1">
        <Arrow dir="up" />
        <span className={clsx('flex w-[14px] items-center justify-center rounded-[2px] border border-[#979797] bg-linear-to-r from-[#f6f6f6] to-[#cdcdcd]', thumb)}>
          {!muted && <span className="h-[7px] w-[7px] border-y border-[#777]"><span className="mt-[2px] block h-px bg-[#777]" /></span>}
        </span>
        <span className="flex-1" />
        <Arrow dir="down" />
      </div>
    </div>
  );
}

function PropertiesDialog() {
  const fieldset = 'mr-[11px] ml-[7px] rounded-[3px] border border-[#d5dfe5] pr-2 pl-[7px]';
  return (
    <div
      role="dialog"
      aria-label="Element Properties"
      className="absolute top-[202px] left-0 w-[438px] rounded-tr-lg rounded-br-md border-t border-r-2 border-b-2 border-t-[#3a4656] border-r-[#2cc7ee] border-b-[#35b5d8] bg-[#c9e0f8] pr-[5px] pb-1 font-['Roboto',sans-serif] text-[11px] text-black shadow-[3px_3px_11px_3px_rgba(0,0,0,0.8)]"
    >
      <div className="flex h-[26px] items-start justify-between bg-linear-to-r from-[#eef5fc] from-0% via-[#c3dbf4] via-30% to-[#d9e9fa]">
        <h2 className="-ml-[5px] pt-1 font-['Open_Sans',sans-serif] text-[11px]">Element Properties</h2>
        <button type="button" aria-label="Close" className="flex h-4 w-[42px] items-center justify-center rounded-b border border-t-0 border-[#5c1a14] bg-linear-to-b from-[#e0a094] via-[#c4412e] via-50% to-[#d4705c]">
          <svg width="12" height="10" viewBox="0 0 12 10" aria-hidden="true">
            <path d="M2 0l8 9M10 0L2 9" stroke="#533" strokeWidth="4" />
            <path d="M2.500 1l7 7.500M9.500 1l-7 7.500" stroke="#fff" strokeWidth="2.200" />
          </svg>
        </button>
      </div>

      <form className="border-t border-r border-b border-[#5c6b7a] bg-[#f0f0f0] pt-[11px] pb-[11px]">
        <div className="flex items-start">
          <label htmlFor="family" className="w-[66px] pt-1 pl-[5px] leading-3">Family:</label>
          <Combo id="family" value="System Family: Fascia" className="mr-[13px] w-[222px]" />
          <PushButton disabled className="w-[118px] font-['Open_Sans',sans-serif]">Load...</PushButton>
        </div>
        <div className="mt-2 flex items-start">
          <label htmlFor="type" className="w-[66px] pt-[5px] pl-[5px] leading-3">Type:</label>
          <Combo id="type" value="Fascia" className="mr-[13px] w-[222px] pt-px" />
          <button type="button" className="h-[22px] w-[118px] rounded-[3px] border border-[#3c7fb1] bg-linear-to-b from-[#eef7fc] via-[#d9eef9] to-[#b4daee] font-['Open_Sans',sans-serif] shadow-[inset_0_0_0_1px_#48d0f5]">
            Edit / New...
          </button>
        </div>

        <fieldset className={clsx(fieldset, 'mt-4 pt-[6px] pb-[9px]')}>
          <legend className="leading-4">Type Parameters: Control all elements of this type</legend>
          <ParamTable sections={typeParams} muted thumb="mt-[6px] h-[15px]" height="h-[104px]" />
        </fieldset>

        <fieldset className={clsx(fieldset, 'mt-[10px] pt-[5px] pb-[9px]')}>
          <legend className="leading-4">Instance Parameters - Control selected or to-be-created instance</legend>
          <ParamTable sections={instanceParams} thumb="mt-10 h-[188px]" height="h-[261px]" />
        </fieldset>

        <div className="mt-[10px] mr-[11px] flex justify-end gap-2 font-['Open_Sans',sans-serif]">
          <PushButton className="w-[88px]">OK</PushButton>
          <PushButton className="w-[88px]">Cancel</PushButton>
        </div>
      </form>

      {/* callouts over the parameter rows */}
      <div className="pointer-events-none absolute top-[156px] left-[151px] h-[43px] w-[251px] border-4 border-[#f00] shadow-[0_2px_5px_1px_rgba(0,0,0,0.4),inset_3px_4px_9px_rgba(0,0,0,0.55)]" />
      <div className="pointer-events-none absolute top-[460px] left-[10px] h-[65px] w-[394px] border-4 border-[#f00] shadow-[0_2px_5px_1px_rgba(0,0,0,0.4),inset_3px_4px_9px_rgba(0,0,0,0.5)]" />
    </div>
  );
}

export default function App() {
  return (
    <div className="relative flex h-screen flex-col overflow-hidden bg-[#f0f0f0] font-['Open_Sans',sans-serif] leading-4">
      <TitleBar />
      <div className="flex min-h-0 flex-1 flex-col border-l-4 border-[#6f8298]">
        <MenuBar />
        <Toolbars />
        <main className="flex min-h-0 flex-1 border-t border-l border-[#5a5a5a]">
          <DesignBar />
          <div className="w-[6px] shrink-0 bg-[#fafafa]" />
          <ProjectBrowser />
          <div className="w-[9px] shrink-0 bg-[#f4f4f4]" />
          <ChildWindow title="Escadas com 3 lanços.rvt - 3D View: {3D}" className="flex-1 border-t-2" scale="1 : 100" solid>
            <ModelView />
          </ChildWindow>
          <ChildWindow title="65124_EIFS_-_Fascia_Profile.rfa - Floor Pl..." className="-mr-[22px] w-[355px] shrink-0 border-t-2" scale={'1" = 1\'-0"'} solid={false}>
            <ProfileView />
          </ChildWindow>
        </main>
      </div>
      <PropertiesDialog />
    </div>
  );
}
